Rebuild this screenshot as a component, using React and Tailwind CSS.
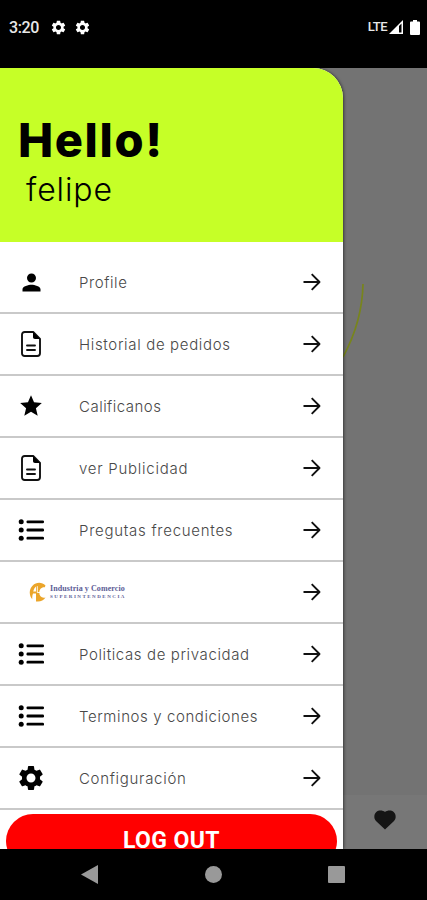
import { MdPerson, MdSettings, MdStar } from "react-icons/md";

function DocumentIcon() {
  return (
    <svg width="20" height="26" viewBox="0 0 20 26" fill="none">
      <path d="M3.700 1H12.200L19 7.800V22.300C19 24 18 25 16.300 25H3.700C2 25 1 24 1 22.300V3.700C1 2 2 1 3.700 1Z" stroke="#111" strokeWidth="1.900" strokeLinejoin="round" />
      <path d="M12 1L19 8H14C12.700 8 12 7.300 12 6Z" fill="#000" />
      <path d="M6 14.500H14M6 19H14" stroke="#111" strokeWidth="1.900" strokeLinecap="round" />
    </svg>
  );
}

function ListIcon() {
  return (
    <svg width="26" height="22" viewBox="0 0 26 22">
      {[2.8, 11, 19.2].map((y) => (
        <g key={y}>
          <circle cx="3.200" cy={y} r="2.500" />
          <rect x="8.500" y={y - 1.4} width="17.500" height="2.800" rx="1.200" />
        </g>
      ))}
    </svg>
  );
}

function ArrowIcon() {
  return (
    <svg width="18" height="18" viewBox="0 0 18 18" fill="none" stroke="#111" strokeWidth="1.900" className="shrink-0">
      <path d="M0.500 9H16.500M8.700 1.200L16.500 9L8.700 16.800" strokeLinejoin="round" />
    </svg>
  );
}

function SuperintendenciaLogo() {
  return (
    <div className="ml-[29px] flex items-center gap-[3px]">
      <svg width="18" height="20" viewBox="0 0 18 20">
        <path d="M3.300 17.200C0 14 -0.300 7.500 3.500 3.700C7.500 -0.300 13 0 16.500 3.500L15.800 5.300C12.300 5 10.300 7.500 10.300 10.800C10.300 14.300 12.800 16.500 16.500 15.500C14.500 18.500 11 20.200 7 19.400V11.500H4C3.300 13.200 3.100 15 3.300 17.200Z" fill="#eba52a" />
        <path d="M4.200 9.500C4.800 7.200 5.700 5.600 7 4.500V9.500Z" fill="#fff" />
        <path d="M8.300 4.200V10.500H12.500" stroke="#fff" strokeWidth="0.900" fill="none" />
      </svg>
      <div className="w-[76px] whitespace-nowrap font-['Liberation_Serif',serif] font-bold text-[#5c5c96]">
        <p className="text-[8px] leading-[9px] tracking-[0.080px]">Industria y Comercio</p>
        <p className="text-[5px] leading-[7px] tracking-[1.500px]">SUPERINTENDENCIA</p>
      </div>
    </div>
  );
}

const person = <MdPerson size={27} />;
const star = <MdStar size={26} />;
const gear = <MdSettings size={30} />;

const items = [
  { label: "Profile", icon: person, spacing: "tracking-[0.600px]" },
  { label: "Historial de pedidos", icon: <DocumentIcon />, spacing: "tracking-[0.660px]" },
  { label: "Calificanos", icon: star, spacing: "tracking-[0.490px]" },
  { label: "ver Publicidad", icon: <DocumentIcon />, spacing: "tracking-[0.740px]" },
  { label: "Pregutas frecuentes", icon: <ListIcon />, spacing: "tracking-[0.730px]" },
  { logo: true },
  { label: "Politicas de privacidad", icon: <ListIcon />, spacing: "tracking-[0.610px]" },
  { label: "Terminos y condiciones", icon: <ListIcon />, spacing: "tracking-[0.590px]" },
  { label: "Configuración", icon: gear, spacing: "tracking-[0.700px]" },
];

function MenuRow({ item }) {
  return (
    <div className="flex h-[62px] items-center justify-between border-b-2 border-[#c9c9c9] pr-[22px]">
      {item.logo ? (
        <SuperintendenciaLogo />
      ) : (
        <div className="flex items-center">
          <span className="ml-[15px] flex w-8 justify-center">{item.icon}</span>
          <span className={`ml-8 whitespace-nowrap pt-[2px] text-[15px] font-light text-[#484848] ${item.spacing}`}>{item.label}</span>
        </div>
      )}
      <ArrowIcon />
    </div>
  );
}

function StatusBar() {
  return (
    <header className="flex h-[68px] shrink-0 items-start justify-between bg-black pl-[9px] pr-[7px] pt-[17px] font-['Roboto',sans-serif] text-[#e8e8e8]">
      <div className="flex h-5 items-center">
        <span className="w-[41px] pt-[2px] text-[16px] font-medium tracking-[-0.400px]">3:20</span>
        <MdSettings size={17} color="#fff" />
        <MdSettings size={17} color="#fff" className="ml-[7px]" />
      </div>
      <div className="flex h-5 items-center">
        <span className="text-[13px] font-medium tracking-[-0.500px]">LTE</span>
        <svg width="14" height="14" viewBox="0 0 14 14" className="ml-[2px]">
          <path d="M14 0V14H0Z" fill="#fff" />
          <path d="M10 6L12.500 3.500V12.500H10Z" fill="#000" />
        </svg>
        <svg width="10" height="15" viewBox="0 0 10 15" className="ml-[7px]">
          <path d="M3 0H7V1.500H9Q10 1.500 10 2.500V14Q10 15 9 15H1Q0 15 0 14V2.500Q0 1.500 1 1.500H3Z" fill="#fff" />
        </svg>
      </div>
    </header>
  );
}

export default function App() {
  return (
    <div className="flex h-[900px] w-[427px] flex-col overflow-hidden bg-black font-['Inter',sans-serif]">
      <StatusBar />
      <main className="flex h-[781px] shrink-0 overflow-hidden bg-[#737373]">
        <aside className="z-10 h-full w-[343px] shrink-0 overflow-hidden rounded-tr-[30px] bg-white shadow-[1px_0_3px_rgba(0,0,0,0.5)]">
          <div className="h-[174px] bg-[#c6ff27] pt-[46px] text-black">
            <h1 className="ml-[18px] whitespace-nowrap text-[47px] font-extrabold leading-[52px] tracking-[1.600px]">Hello!</h1>
            <p className="ml-[26px] pt-px text-[32px] font-light leading-[46px] tracking-[0.900px]">felipe</p>
          </div>
          <nav className="pt-[10px]">
            {items.map((item, i) => (
              <MenuRow key={i} item={item} />
            ))}
          </nav>
          <button className="mx-1.5 mt-[4px] block h-[54px] w-[331px] rounded-[27px] bg-[#ff0000] font-['Roboto',sans-serif] text-[23px] font-bold tracking-[0.400px] text-white">
            LOG OUT
          </button>
        </aside>
        <div className="flex flex-1 flex-col justify-between">
          <svg width="84" height="300" viewBox="0 0 84 300" fill="none">
            <path d="M20 216C19.500 241 12 267 0 289" stroke="#78851c" strokeWidth="1.700" />
          </svg>
          <div className="flex h-[54px] justify-center bg-[#777] pt-[15px]">
            <svg width="22" height="20" viewBox="0 0 22 20" fill="#151515">
              <path d="M11 19.500L2 11C-0.500 8.300 0 4 2.300 2C4.700 -0.100 8.800 0.200 11 2C13.200 0.200 17.300 -0.100 19.700 2C22 4 22.500 8.300 20 11Z" />
            </svg>
          </div>
        </div>
      </main>
      <footer className="flex h-[51px] items-center bg-black">
        <svg width="17" height="19" viewBox="0 0 17 19" className="ml-[81px]">
          <path d="M17 0V19L0 9.500Z" fill="#999" />
        </svg>
        <span className="ml-[107px] size-[17px] rounded-full bg-[#999]" />
        <span className="ml-[106px] size-[17px] rounded-[1px] bg-[#999]" />
      </footer>
    </div>
  );
}
